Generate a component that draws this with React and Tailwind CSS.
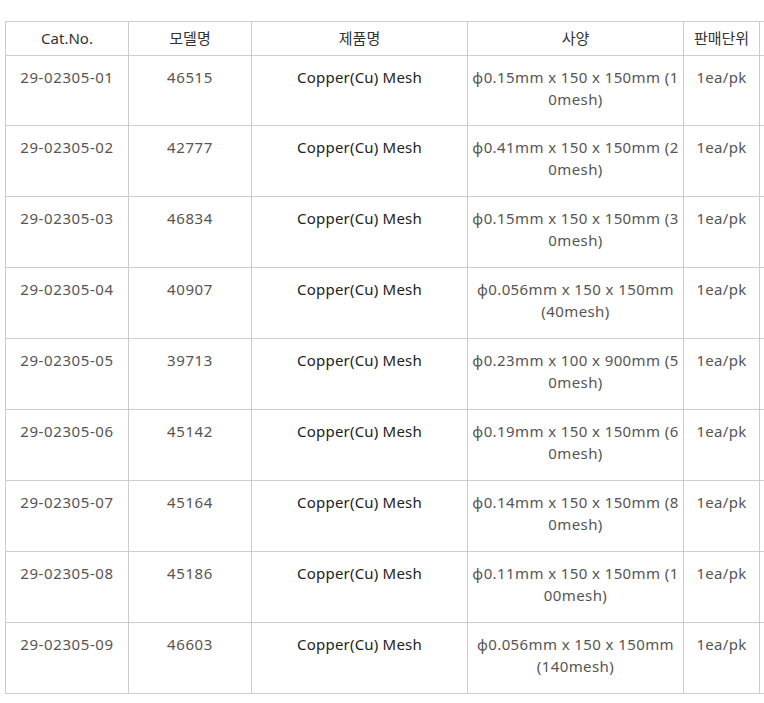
export default function App() {
  const rows = [
    ["29-02305-01", "46515", ["φ0.15mm x 150 x 150mm (1", "0mesh)"]],
    ["29-02305-02", "42777", ["φ0.41mm x 150 x 150mm (2", "0mesh)"]],
    ["29-02305-03", "46834", ["φ0.15mm x 150 x 150mm (3", "0mesh)"]],
    ["29-02305-04", "40907", ["φ0.056mm x 150 x 150mm", "(40mesh)"]],
    ["29-02305-05", "39713", ["φ0.23mm x 100 x 900mm (5", "0mesh)"]],
    ["29-02305-06", "45142", ["φ0.19mm x 150 x 150mm (6", "0mesh)"]],
    ["29-02305-07", "45164", ["φ0.14mm x 150 x 150mm (8", "0mesh)"]],
    ["29-02305-08", "45186", ["φ0.11mm x 150 x 150mm (1", "00mesh)"]],
    ["29-02305-09", "46603", ["φ0.056mm x 150 x 150mm", "(140mesh)"]],
  ];
  const font = { fontFamily: '"Noto Sans", "Noto Sans CJK KR", sans-serif' };
  const td = "border border-[#cccccc] text-center align-top pt-[10px] leading-[22px] p-0";
  return (
    <div className="w-[764px] h-[703px] overflow-hidden bg-white pl-[5px] pt-[21px]" style={font}>
      <table className="border-collapse table-fixed w-[830px] text-[15px]">
        <colgroup>
          <col className="w-[123px]" />
          <col className="w-[123px]" />
          <col className="w-[216px]" />
          <col className="w-[216px]" />
          <col className="w-[76px]" />
          <col className="w-[76px]" />
        </colgroup>
        <thead>
          <tr className="h-[34px]">
            {["Cat.No.", "모델명", "제품명", "사양", "판매단위", ""].map((h, i) => (
              <th key={i} className="border border-[#cccccc] font-normal text-[#333] text-center align-middle leading-[20px] pb-[2px] p-0">
                {h}
              </th>
            ))}
          </tr>
        </thead>
        <tbody>
          {rows.map((r, i) => (
            <tr key={r[0]} className={i === 0 ? "h-[70px]" : "h-[71px]"}>
              <td className={`${td} text-[#555] tracking-[0.6px]`}>{r[0]}</td>
              <td className={`${td} text-[#555] tracking-[0.6px]`}>{r[1]}</td>
              <td className={`${td} text-[#222] tracking-[0.2px]`}>Copper(Cu) Mesh</td>
              <td className={`${td} text-[#555] tracking-[0.4px]`}>
                {r[2][0]}
                <br />
                {r[2][1]}
              </td>
              <td className={`${td} text-[#555] tracking-[0.3px]`}>1ea/pk</td>
              <td className="border border-[#cccccc]"></td>
            </tr>
          ))}
        </tbody>
      </table>
    </div>
  );
}
